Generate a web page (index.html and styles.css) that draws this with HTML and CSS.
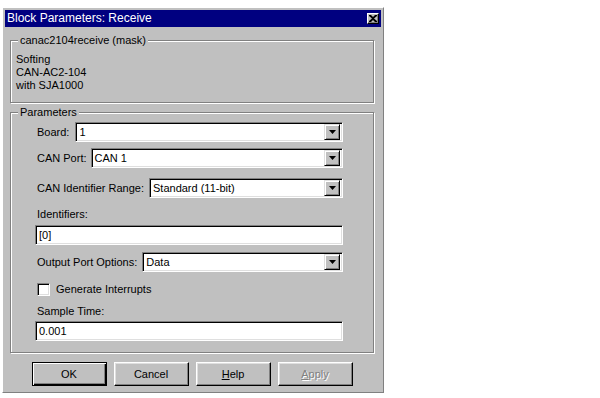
FILE: index.html
```html
<!DOCTYPE html>
<html lang="en">
<head>
    <meta charset="UTF-8">
    <title>Block Parameters: Receive</title>
    <link rel="stylesheet" href="styles.css">
</head>
<body>

    <div class="dialog">
        <div class="titlebar">
            <span class="title">Block Parameters: Receive</span>
            <span class="close-btn">
                <svg width="8" height="7" viewBox="0 0 8 7"><path d="M0 0h2l2 2 2-2h2v1L5 3.5 8 6v1H6L4 5 2 7H0V6l3-2.5L0 1z" fill="#000"/></svg>
            </span>
        </div>

        <div class="dialog-body">
            <fieldset class="group mask">
                <legend>canac2104receive (mask)</legend>
                <div>Softing</div>
                <div>CAN-AC2-104</div>
                <div>with SJA1000</div>
            </fieldset>

            <fieldset class="group params">
                <legend>Parameters</legend>

                <div class="row row-board">
                    <label>Board:</label>
                    <div class="combo"><span class="value">1</span><span class="arrow"><svg width="7" height="4" viewBox="0 0 7 4"><path d="M0 0h7L3.5 4z" fill="#000"/></svg></span></div>
                </div>
                <div class="row row-port">
                    <label>CAN Port:</label>
                    <div class="combo"><span class="value">CAN 1</span><span class="arrow"><svg width="7" height="4" viewBox="0 0 7 4"><path d="M0 0h7L3.5 4z" fill="#000"/></svg></span></div>
                </div>
                <div class="row row-range">
                    <label>CAN Identifier Range:</label>
                    <div class="combo"><span class="value">Standard (11-bit)</span><span class="arrow"><svg width="7" height="4" viewBox="0 0 7 4"><path d="M0 0h7L3.5 4z" fill="#000"/></svg></span></div>
                </div>

                <label class="field-label label-ids">Identifiers:</label>
                <div class="textbox box-ids">[0]</div>

                <div class="row row-output">
                    <label>Output Port Options:</label>
                    <div class="combo"><span class="value">Data</span><span class="arrow"><svg width="7" height="4" viewBox="0 0 7 4"><path d="M0 0h7L3.5 4z" fill="#000"/></svg></span></div>
                </div>

                <div class="check-row">
                    <span class="checkbox"></span>
                    <span>Generate Interrupts</span>
                </div>

                <label class="field-label label-time">Sample Time:</label>
                <div class="textbox box-time">0.001</div>
            </fieldset>

            <div class="buttons">
                <button class="btn default">OK</button>
                <button class="btn">Cancel</button>
                <button class="btn"><u>H</u>elp</button>
                <button class="btn disabled"><u>A</u>pply</button>
            </div>
        </div>
    </div>

</body>
</html>
```

FILE: styles.css
```css
body {
    margin: 0;
    background: #fff;
    font-family: "Liberation Sans", Arial, sans-serif;
    font-size: 11px;
    line-height: 13px;
    color: #000;
}
.dialog {
    width: 382px;
    box-sizing: border-box;
    margin: 7px 0 0 2px;
    padding: 2px;
    background: #c0c0c0;
    border: 1px solid;
    border-color: #fff #808080 #808080 #fff;
}
.titlebar {
    height: 17px;
    display: flex;
    align-items: center;
    padding: 0 2px;
    background: #000080;
    color: #fff;
}
.title {
    font-size: 12px;
    flex: 1;
}
.close-btn {
    width: 12px;
    height: 11px;
    box-sizing: border-box;
    display: flex;
    align-items: center;
    justify-content: center;
    background: #c0c0c0;
    border: 1px solid;
    border-color: #fff #000 #000 #fff;
    box-shadow: inset -1px -1px #808080;
}
.dialog-body {
    padding: 7px 7px 4px 5px;
}
.group {
    margin: 0;
    min-width: 0;
    border: 1px solid #808080;
    box-shadow: inset 1px 1px #fff, 1px 1px #fff;
}
.group legend {
    padding: 0 2px;
    background: #c0c0c0;
    line-height: 13px;
}
.mask {
    padding: 6px 5px 10px 5px;
}
.mask legend {
    margin-left: 2px;
}
.params {
    margin-top: 3px;
    padding: 3px 30px 11px 24px;
}
.params legend {
    margin-left: -17px;
}
.row {
    display: flex;
    align-items: center;
    gap: 6px;
}
.row label {
    padding-left: 2px;
}
.row-port { margin-top: 6px; gap: 4px; }
.row-range { margin-top: 10px; gap: 5px; }
.row-output { margin-top: 7px; gap: 5px; }
.combo, .textbox {
    height: 20px;
    box-sizing: border-box;
    display: flex;
    align-items: center;
    background: #fff;
    border: 1px solid;
    border-color: #808080 #fff #fff #808080;
    box-shadow: inset 1px 1px #000, inset -1px -1px #dfdfdf;
}
.combo {
    flex: 1;
    padding: 2px;
}
.combo .value {
    flex: 1;
    padding-left: 1px;
}
.arrow {
    width: 16px;
    height: 16px;
    box-sizing: border-box;
    display: flex;
    align-items: center;
    justify-content: center;
    background: #c0c0c0;
    border: 1px solid;
    border-color: #dfdfdf #000 #000 #dfdfdf;
    box-shadow: inset 1px 1px #fff, inset -1px -1px #808080;
}
.textbox {
    padding-left: 3px;
}
.field-label {
    display: block;
    padding-left: 2px;
}
.label-ids { margin-top: 10px; }
.box-ids { margin-top: 4px; }
.check-row {
    display: flex;
    align-items: center;
    gap: 6px;
    margin-top: 11px;
    padding-left: 2px;
    height: 13px;
}
.checkbox {
    width: 13px;
    height: 13px;
    box-sizing: border-box;
    background: #fff;
    border: 1px solid;
    border-color: #808080 #fff #fff #808080;
    box-shadow: inset 1px 1px #000, inset -1px -1px #dfdfdf;
}
.label-time { margin-top: 9px; }
.box-time { margin-top: 3px; }
.buttons {
    display: flex;
    justify-content: center;
    gap: 7px;
    margin-top: 9px;
}
.btn {
    width: 75px;
    height: 24px;
    padding: 0;
    box-sizing: border-box;
    font-family: "Liberation Sans", Arial, sans-serif;
    font-size: 11px;
    color: #000;
    background: #c0c0c0;
    border: 1px solid;
    border-color: #fff #000 #000 #fff;
    box-shadow: inset -1px -1px #808080, inset 1px 1px #dfdfdf;
}
.btn.default {
    border-color: #000;
    box-shadow: inset 1px 1px #fff, inset -1px -1px #000, inset -2px -2px #808080;
}
.btn.disabled {
    color: #808080;
    text-shadow: 1px 1px #fff;
}
```
